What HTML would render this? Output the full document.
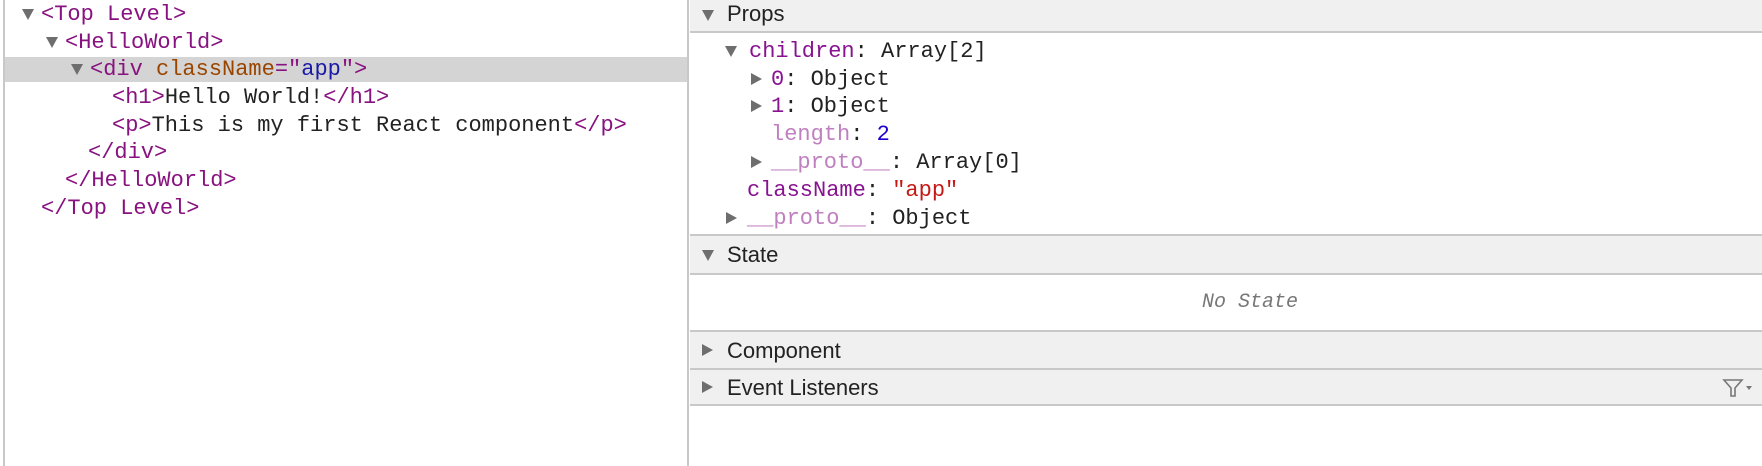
<!DOCTYPE html>
<html><head><style>
body{margin:0;width:1762px;height:466px;background:#fff;position:relative;overflow:hidden;font-family:"Liberation Mono",monospace;font-size:22px;color:#222}
.a{position:absolute;white-space:pre;line-height:26px}
.t{color:#881280}.an{color:#994500}.av{color:#1a1aa6}
.k{color:#881391}.d{color:#c080c0}.n{color:#1c00cf}.s{color:#c41a16}
.tri{position:absolute;width:0;height:0}
.dn{border-left:6px solid transparent;border-right:6px solid transparent;border-top:11px solid #6e6e6e}
.rt{border-top:6px solid transparent;border-bottom:6px solid transparent;border-left:11px solid #6e6e6e}
.hd{position:absolute;left:690px;right:0;background:#f0f0f0;border-bottom:2px solid #c8c8c8;font-family:"Liberation Sans",sans-serif;font-size:22px;color:#222}
.hd span{position:absolute;left:37px}
</style></head><body>
<div style="position:absolute;left:3px;top:0;width:2px;height:466px;background:#c8c8c8"></div>
<div style="position:absolute;left:5px;top:57px;width:682px;height:25px;background:#d4d4d4"></div>
<div style="position:absolute;left:687px;top:0;width:2px;height:466px;background:#c8c8c8"></div>

<div class="tri dn" style="left:22px;top:9px"></div>
<div class="a t" style="left:41px;top:2px">&lt;Top Level&gt;</div>
<div class="tri dn" style="left:46px;top:37px"></div>
<div class="a t" style="left:65px;top:30px">&lt;HelloWorld&gt;</div>
<div class="tri dn" style="left:71px;top:64px"></div>
<div class="a" style="left:90px;top:57px"><span class="t">&lt;div </span><span class="an">className</span><span class="t">="</span><span class="av">app</span><span class="t">"&gt;</span></div>
<div class="a" style="left:112px;top:85px"><span class="t">&lt;h1&gt;</span>Hello World!<span class="t">&lt;/h1&gt;</span></div>
<div class="a" style="left:112px;top:113px"><span class="t">&lt;p&gt;</span>This is my first React component<span class="t">&lt;/p&gt;</span></div>
<div class="a t" style="left:88px;top:140px">&lt;/div&gt;</div>
<div class="a t" style="left:65px;top:168px">&lt;/HelloWorld&gt;</div>
<div class="a t" style="left:41px;top:196px">&lt;/Top Level&gt;</div>

<div class="hd" style="top:0;height:31px"><div class="tri dn" style="left:12px;top:10px"></div><span style="top:1px">Props</span></div>
<div class="tri dn" style="left:725px;top:46px"></div>
<div class="a" style="left:749px;top:39px"><span class="k">children</span>: Array[2]</div>
<div class="tri rt" style="left:751px;top:73px"></div>
<div class="a" style="left:771px;top:67px"><span class="k">0</span>: Object</div>
<div class="tri rt" style="left:751px;top:100px"></div>
<div class="a" style="left:771px;top:94px"><span class="k">1</span>: Object</div>
<div class="a" style="left:771px;top:122px"><span class="d">length</span>: <span class="n">2</span></div>
<div class="tri rt" style="left:751px;top:156px"></div>
<div class="a" style="left:771px;top:150px"><span class="d">__proto__</span>: Array[0]</div>
<div class="a" style="left:747px;top:178px"><span class="k">className</span>: <span class="s">"app"</span></div>
<div class="tri rt" style="left:726px;top:212px"></div>
<div class="a" style="left:747px;top:206px"><span class="d">__proto__</span>: Object</div>

<div class="hd" style="top:234px;height:37px;border-top:2px solid #c8c8c8"><div class="tri dn" style="left:12px;top:14px"></div><span style="top:6px">State</span></div>
<div class="a" style="left:1202px;top:290px;font-style:italic;color:#777;font-size:20px">No State</div>
<div class="hd" style="top:330px;height:36px;border-top:2px solid #c8c8c8"><div class="tri rt" style="left:12px;top:12px"></div><span style="top:6px">Component</span></div>
<div class="hd" style="top:370px;height:34px"><div class="tri rt" style="left:12px;top:11px"></div><span style="top:5px">Event Listeners</span>
<svg style="position:absolute;right:8px;top:7px" width="32" height="22" viewBox="0 0 32 22"><path d="M2 3 H20 L13 11 V19 H9 V11 Z" fill="none" stroke="#777" stroke-width="1.6"/><path d="M24 9 H30 L27 13 Z" fill="#777"/></svg></div>
</body></html>
